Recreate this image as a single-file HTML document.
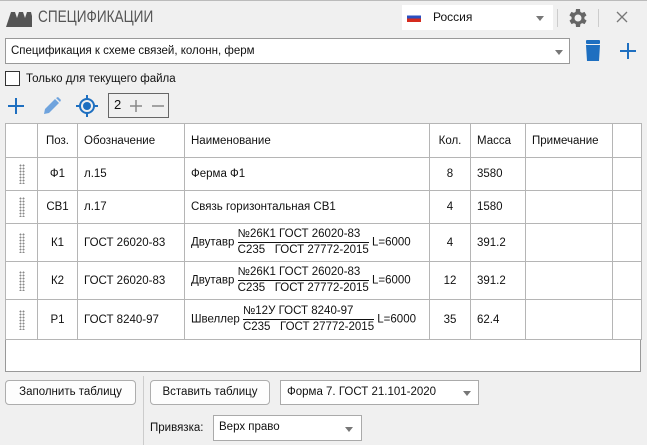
<!DOCTYPE html>
<html><head><meta charset="utf-8"><style>
*{box-sizing:border-box;margin:0;padding:0}
body{width:647px;height:445px;background:#f0f0f0;font-family:"Liberation Sans",sans-serif;font-size:11.5px;color:#111;position:relative;overflow:hidden}
.a{position:absolute;white-space:nowrap}
.box{position:absolute;background:#fff;border:1px solid #adadad}
.btn{position:absolute;background:#fdfdfd;border:1px solid #adadad;border-radius:4px;text-align:center;line-height:23px}
.arr{position:absolute;width:0;height:0;border-left:4px solid transparent;border-right:4px solid transparent;border-top:5px solid #777}
table{border-collapse:collapse;position:absolute;left:5px;top:123px;background:#fff;table-layout:fixed;width:607px}
td{border:1px solid #b5b5b5;padding:0 6px;vertical-align:middle;white-space:nowrap;overflow:hidden}
.f{display:inline-block;vertical-align:middle;text-align:left;line-height:15px}
.f span{display:block}
.f span:first-child{border-bottom:1px solid #111}
.g{width:6px;height:20px;margin:auto;background-image:radial-gradient(#888 0.9px,transparent 1.1px);background-size:3px 3px}
</style></head><body>
<div class="a" style="left:0;top:0;width:647px;height:1px;background:#bbb"></div>
<svg class="a" style="left:6px;top:8px" width="26" height="20" viewBox="0 0 26 20"><path d="M0 19 L5 4 L9 4 L11 10 L8 19Z M8 19 L13 4 L17 4 L19 10 L16 19Z M16 19 L21 4 L25 4 L26 8 L26 19Z" fill="#555"/></svg>
<div class="a" style="left:38px;top:7px;font-size:17px;color:#555;transform:scaleX(0.8);transform-origin:left">СПЕЦИФИКАЦИИ</div>
<div class="a" style="left:402px;top:5px;width:151px;height:25px;background:#fff"></div>
<div class="a" style="left:407px;top:12px;width:14px;height:10px;background:linear-gradient(#fff 33%,#2a4fc0 33% 66%,#d52b1e 66%)"></div>
<div class="a" style="left:433px;top:10px;font-size:12px">Россия</div>
<div class="arr" style="left:536px;top:16px"></div>
<div class="a" style="left:557px;top:9px;width:1px;height:18px;background:#ccc"></div>
<svg class="a" style="left:566px;top:6px" width="24" height="24" viewBox="0 0 24 24"><path fill="#666" d="M19.4 13a7.5 7.5 0 0 0 0-2l2.1-1.6-2-3.5-2.5 1a7.6 7.6 0 0 0-1.7-1L15 3h-4l-.4 2.9a7.6 7.6 0 0 0-1.7 1l-2.5-1-2 3.5L6.6 11a7.5 7.5 0 0 0 0 2l-2.1 1.6 2 3.5 2.5-1a7.6 7.6 0 0 0 1.7 1L11 21h4l.4-2.9a7.6 7.6 0 0 0 1.7-1l2.5 1 2-3.5zM13 15.5a3.5 3.5 0 1 1 0-7 3.5 3.5 0 0 1 0 7z" transform="translate(-1 0)"/></svg>
<div class="a" style="left:598px;top:9px;width:1px;height:18px;background:#ccc"></div>
<svg class="a" style="left:616px;top:11px" width="12" height="12"><path d="M1 1L11 11M11 1L1 11" stroke="#777" stroke-width="1.3"/></svg>

<div class="box" style="left:5px;top:38px;width:565px;height:26px;border-color:#999"></div>
<div class="a" style="left:11px;top:45px">Спецификация к схеме связей, колонн, ферм</div>
<div class="arr" style="left:555px;top:50px"></div>
<svg class="a" style="left:583px;top:40px" width="20" height="22" viewBox="0 0 20 22"><rect x="3" y="0" width="14" height="4" rx="1" fill="#1e6fc0"/><path d="M3 5h14l-1 16H4z" fill="#1e6fc0"/></svg>
<svg class="a" style="left:619px;top:42px" width="18" height="18"><path d="M9 1v16M1 9h16" stroke="#1e6fc0" stroke-width="2"/></svg>

<div class="box" style="left:5px;top:71px;width:15px;height:15px;border-color:#333"></div>
<div class="a" style="left:26px;top:73px">Только для текущего файла</div>

<svg class="a" style="left:7px;top:97px" width="18" height="18"><path d="M9 1v16M1 9h16" stroke="#1e6fc0" stroke-width="2"/></svg>
<svg class="a" style="left:42px;top:96px" width="20" height="20" viewBox="0 0 20 20"><path d="M2 18l1-5L13 3l4 4L7 17z" fill="#6fa3dd"/><path d="M14 2l2-1 3 3-1 2z" fill="#6fa3dd"/></svg>
<svg class="a" style="left:76px;top:95px" width="22" height="22" viewBox="0 0 22 22"><circle cx="11" cy="11" r="7" fill="none" stroke="#1e6fc0" stroke-width="2"/><circle cx="11" cy="11" r="4" fill="#1e6fc0"/><path d="M11 0v4M11 18v4M0 11h4M18 11h4" stroke="#1e6fc0" stroke-width="2"/></svg>
<div class="a" style="left:108px;top:93px;height:25px;border:1px solid #666;width:61px;background:#f0f0f0"></div>
<div class="a" style="left:114px;top:97px;font-size:13px">2</div>
<svg class="a" style="left:130px;top:100px" width="12" height="12"><path d="M6 0v12M0 6h12" stroke="#888" stroke-width="1.5"/></svg>
<svg class="a" style="left:152px;top:100px" width="12" height="12"><path d="M0 6h12" stroke="#888" stroke-width="1.5"/></svg>

<div class="a" style="left:5px;top:123px;width:636px;height:249px;background:#fff;border:1px solid #999"></div>
<table>
<colgroup><col style="width:32px"><col style="width:40px"><col style="width:107px"><col style="width:245px"><col style="width:41px"><col style="width:55px"><col style="width:87px"><col style="width:29px"></colgroup>
<tr style="height:34px"><td></td><td style="text-align:center">Поз.</td><td>Обозначение</td><td>Наименование</td><td style="text-align:center">Кол.</td><td>Масса</td><td>Примечание</td><td></td></tr>
<tr style="height:33px"><td><div class="g"></div></td><td style="text-align:center">Ф1</td><td>л.15</td><td>Ферма Ф1</td><td style="text-align:center">8</td><td>3580</td><td></td><td></td></tr>
<tr style="height:33px"><td><div class="g"></div></td><td style="text-align:center">СВ1</td><td>л.17</td><td>Связь горизонтальная СВ1</td><td style="text-align:center">4</td><td>1580</td><td></td><td></td></tr>
<tr style="height:38px"><td><div class="g"></div></td><td style="text-align:center">К1</td><td>ГОСТ 26020-83</td><td>Двутавр <span class="f"><span>№26К1 ГОСТ 26020-83</span><span>С235&nbsp;&nbsp; ГОСТ 27772-2015</span></span> L=6000</td><td style="text-align:center">4</td><td>391.2</td><td></td><td></td></tr>
<tr style="height:38px"><td><div class="g"></div></td><td style="text-align:center">К2</td><td>ГОСТ 26020-83</td><td>Двутавр <span class="f"><span>№26К1 ГОСТ 26020-83</span><span>С235&nbsp;&nbsp; ГОСТ 27772-2015</span></span> L=6000</td><td style="text-align:center">12</td><td>391.2</td><td></td><td></td></tr>
<tr style="height:40px"><td><div class="g"></div></td><td style="text-align:center">Р1</td><td>ГОСТ 8240-97</td><td>Швеллер <span class="f"><span>№12У ГОСТ 8240-97</span><span>С235&nbsp;&nbsp; ГОСТ 27772-2015</span></span> L=6000</td><td style="text-align:center">35</td><td>62.4</td><td></td><td></td></tr>
</table>

<div class="btn" style="left:5px;top:380px;width:131px;height:25px">Заполнить таблицу</div>
<div class="a" style="left:143px;top:376px;width:1px;height:69px;background:#ccc"></div>
<div class="btn" style="left:150px;top:380px;width:120px;height:25px">Вставить таблицу</div>
<div class="box" style="left:280px;top:380px;width:199px;height:25px;border-color:#aaa"></div>
<div class="a" style="left:287px;top:386px">Форма 7. ГОСТ 21.101-2020</div>
<div class="arr" style="left:463px;top:391px"></div>
<div class="a" style="left:150px;top:422px">Привязка:</div>
<div class="box" style="left:213px;top:415px;width:149px;height:26px;border-color:#aaa"></div>
<div class="a" style="left:219px;top:421px">Верх право</div>
<div class="arr" style="left:345px;top:427px"></div>
</body></html>
